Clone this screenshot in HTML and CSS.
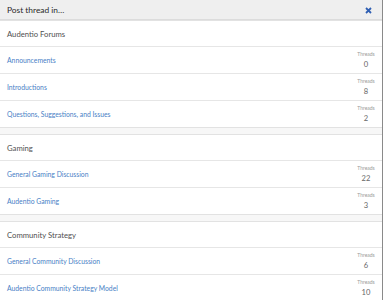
FILE: index.html
```html
<!DOCTYPE html>
<html lang="en">
<head>
    <meta charset="UTF-8">
    <title>Post thread in…</title>
    <link rel="stylesheet" href="styles.css">
</head>
<body>
    <div class="overlay">
        <div class="overlay-title">
            <span>Post thread in…</span>
            <a href="#" class="close">
                <svg width="7" height="7" viewBox="0 0 7 7"><path d="M1 1L6 6M6 1L1 6" stroke="#2f5fb3" stroke-width="1.8"/></svg>
            </a>
        </div>

        <div class="block">
            <div class="cat-head">Audentio Forums</div>
            <div class="node"><a href="#">Announcements</a><div class="stat"><span>Threads</span><b>0</b></div></div>
            <div class="node"><a href="#">Introductions</a><div class="stat"><span>Threads</span><b>8</b></div></div>
            <div class="node"><a href="#">Questions, Suggestions, and Issues</a><div class="stat"><span>Threads</span><b>2</b></div></div>
        </div>

        <div class="block">
            <div class="cat-head">Gaming</div>
            <div class="node"><a href="#">General Gaming Discussion</a><div class="stat"><span>Threads</span><b>22</b></div></div>
            <div class="node"><a href="#">Audentio Gaming</a><div class="stat"><span>Threads</span><b>3</b></div></div>
        </div>

        <div class="block">
            <div class="cat-head">Community Strategy</div>
            <div class="node"><a href="#">General Community Discussion</a><div class="stat"><span>Threads</span><b>6</b></div></div>
            <div class="node"><a href="#">Audentio Community Strategy Model</a><div class="stat"><span>Threads</span><b>10</b></div></div>
        </div>
    </div>
</body>
</html>
```

FILE: styles.css
```css
body, html {
    margin: 0;
    padding: 0;
    font-family: Lato, 'Open Sans', sans-serif;
    background-color: #ffffff;
}

.overlay {
    width: 382px;
    height: 300px;
    overflow: hidden;
    background-color: #f7f7f7;
    border-right: 1px solid #8a8a8a;
}

.overlay-title {
    display: flex;
    justify-content: space-between;
    align-items: center;
    height: 19px;
    padding: 0 10px 0 7px;
    background-color: #efefef;
    border-bottom: 1px solid #dcdcdc;
    font-size: 8.4px;
    color: #2a2a2a;
}

.close {
    display: flex;
    margin-top: 1px;
}

.block {
    background-color: #fff;
    border-top: 1px solid #e2e2e2;
    border-bottom: 1px solid #e2e2e2;
    margin-bottom: 6px;
}

.block:first-of-type {
    border-top: none;
}

.cat-head {
    height: 25px;
    line-height: 26px;
    padding-left: 7px;
    font-size: 7.7px;
    color: #505050;
    border-bottom: 1px solid #e6e6e6;
}

.node {
    display: flex;
    justify-content: space-between;
    align-items: center;
    height: 26px;
    padding: 0 7px;
    border-bottom: 1px solid #e6e6e6;
}

.node:last-child {
    border-bottom: none;
}

.node a {
    font-size: 6.8px;
    color: #4a7fc6;
    text-decoration: none;
}

.stat {
    display: flex;
    flex-direction: column;
    align-items: center;
    width: 24px;
    margin-right: -3px;
    color: #9a9a9a;
}

.stat span {
    font-size: 5px;
    line-height: 9px;
}

.stat b {
    font-weight: normal;
    font-size: 7.6px;
    line-height: 11px;
    color: #666;
}
```
